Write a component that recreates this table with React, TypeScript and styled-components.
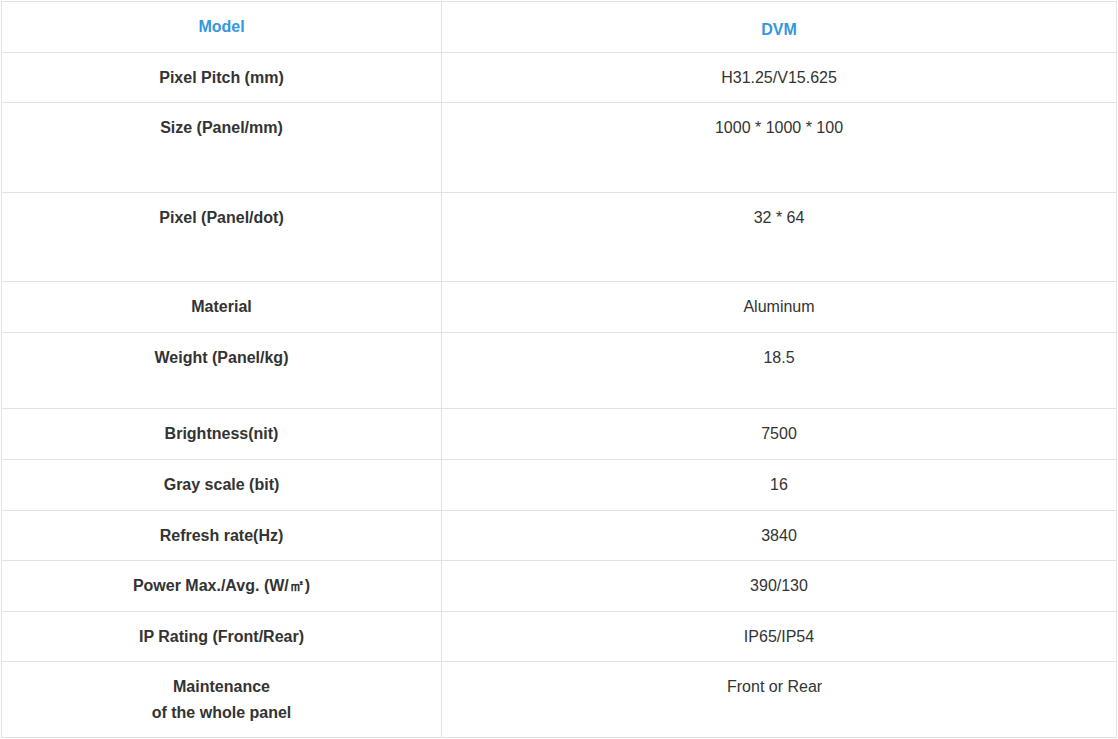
import React from "react";
import styled, { createGlobalStyle } from "styled-components";

type Spec = {
  label: React.ReactNode;
  value: string;
  height: number;
};

const specs: Spec[] = [
  { label: "Pixel Pitch (mm)", value: "H31.25/V15.625", height: 50 },
  { label: "Size (Panel/mm)", value: "1000 * 1000 * 100", height: 90 },
  { label: "Pixel (Panel/dot)", value: "32 * 64", height: 89 },
  { label: "Material", value: "Aluminum", height: 51 },
  { label: "Weight (Panel/kg)", value: "18.5", height: 76 },
  { label: "Brightness(nit)", value: "7500", height: 51 },
  { label: "Gray scale (bit)", value: "16", height: 51 },
  { label: "Refresh rate(Hz)", value: "3840", height: 50 },
  { label: "Power Max./Avg. (W/㎡)", value: "390/130", height: 51 },
  { label: "IP Rating (Front/Rear)", value: "IP65/IP54", height: 50 },
  {
    label: (
      <>
        Maintenance
        <br />
        of the whole panel
      </>
    ),
    value: "Front or Rear\u00a0\u00a0",
    height: 76,
  },
];

export default function App() {
  return (
    <>
      <GlobalStyle />
      <Page>
        <SpecTable>
          <colgroup>
            <col style={{ width: "440px" }} />
            <col />
          </colgroup>
          <thead>
            <tr>
              <HeadCell $offset={0}>Model</HeadCell>
              <HeadCell $offset={3}>DVM</HeadCell>
            </tr>
          </thead>
          <tbody>
            {specs.map((s, i) => (
              <Row key={i} $height={s.height}>
                <LabelCell>{s.label}</LabelCell>
                <ValueCell>{s.value}</ValueCell>
              </Row>
            ))}
          </tbody>
        </SpecTable>
      </Page>
    </>
  );
}

const GlobalStyle = createGlobalStyle`
  body {
    margin: 0;
    background: #fff;
    font-family: "Liberation Sans", Arial, sans-serif;
  }
`;

const Page = styled.div`
  padding: 1px 1px 0 1px;
  width: 1118px;
  box-sizing: border-box;
`;

const SpecTable = styled.table`
  width: 1116px;
  border-collapse: collapse;
  table-layout: fixed;
  font-size: 16px;
  line-height: 26px;
  color: #333;
`;

const HeadCell = styled.th<{ $offset: number }>`
  height: 51px;
  box-sizing: border-box;
  border: 1px solid #e2e2e2;
  padding: ${(p) => 12 + p.$offset}px 8px ${(p) => 11 - p.$offset}px;
  text-align: center;
  vertical-align: top;
  color: #3497e0;
  font-weight: bold;
`;

const Row = styled.tr<{ $height: number }>`
  height: ${(p) => p.$height}px;
`;

const LabelCell = styled.td`
  box-sizing: border-box;
  border: 1px solid #e2e2e2;
  padding: 12px 8px 10px;
  text-align: center;
  vertical-align: top;
  font-weight: bold;
`;

const ValueCell = styled.td`
  box-sizing: border-box;
  border: 1px solid #e2e2e2;
  padding: 12px 8px 10px;
  text-align: center;
  vertical-align: top;
`;
